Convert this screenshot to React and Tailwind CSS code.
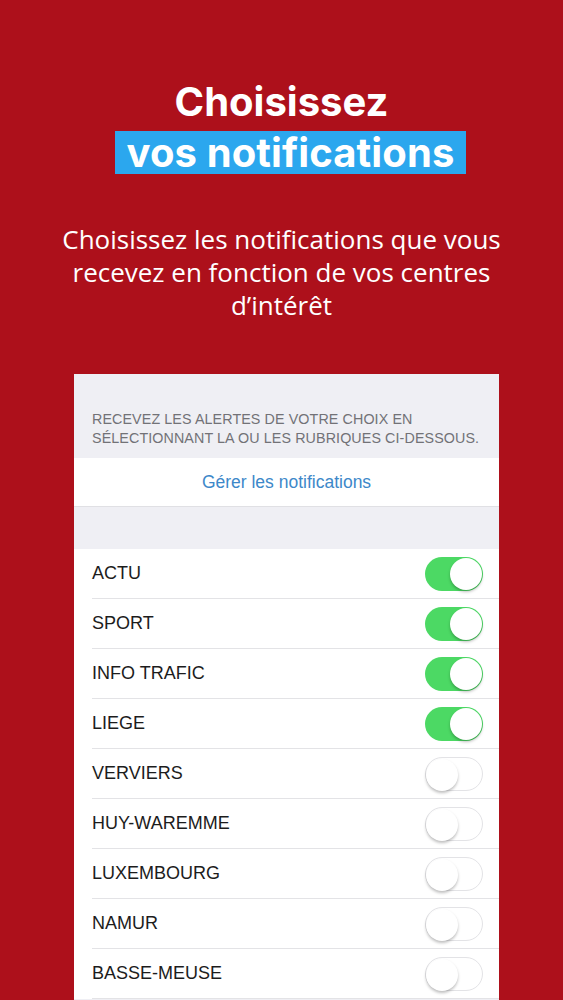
import React, { useState } from 'react';

const topics = [
  { name: 'ACTU', on: true },
  { name: 'SPORT', on: true },
  { name: 'INFO TRAFIC', on: true },
  { name: 'LIEGE', on: true },
  { name: 'VERVIERS', on: false },
  { name: 'HUY-WAREMME', on: false },
  { name: 'LUXEMBOURG', on: false },
  { name: 'NAMUR', on: false },
  { name: 'BASSE-MEUSE', on: false },
];

const Toggle = ({ on, onClick }) => (
  <button
    onClick={onClick}
    className={`relative w-[58px] h-[34px] rounded-full transition-colors ${
      on ? 'bg-[#4cd964]' : 'bg-white border border-[#e3e3e6]'
    }`}
  >
    <span
      className={`absolute top-[1px] w-[32px] h-[32px] rounded-full bg-white shadow-[0_2px_3px_rgba(0,0,0,0.25)] transition-all ${
        on ? 'left-[25px]' : 'left-[0px] top-[0px]'
      }`}
    ></span>
  </button>
);

const App = () => {
  const [items, setItems] = useState(topics);

  const flip = (i) => {
    setItems(items.map((t, j) => (j === i ? { ...t, on: !t.on } : t)));
  };

  return (
    <div className="w-[563px] h-[1000px] overflow-hidden bg-[#ad101b] flex flex-col" style={{ fontFamily: 'Inter, sans-serif' }}>
      {/* Heading */}
      <div className="pt-[77px] flex flex-col items-center text-white">
        <h1 className="text-[40px] leading-[50px] font-bold">Choisissez</h1>
        <div className="mt-[4px] ml-[18px] bg-[#2ba7ee] w-[351px] h-[43px] flex items-center justify-center">
          <span className="text-[40px] leading-[43px] font-bold tracking-[0.1px]">vos notifications</span>
        </div>
      </div>

      <p
        className="mt-[49px] px-[45px] text-center text-white text-[26px] leading-[33px] font-normal"
        style={{ fontFamily: '"Open Sans", sans-serif' }}
      >
        Choisissez les notifications que vous recevez en fonction de vos centres d’intérêt
      </p>

      {/* Settings card */}
      <div
        className="mt-[52px] ml-[74px] w-[425px] flex-1 bg-[#efeff4]"
        style={{ fontFamily: '"Liberation Sans", Arial, sans-serif' }}
      >
        <div className="pt-[36px] pb-[10px] px-[18px] text-[14.3px] leading-[19px] text-[#727277] tracking-[0.1px]">
          RECEVEZ LES ALERTES DE VOTRE CHOIX EN
          <br />
          SÉLECTIONNANT LA OU LES RUBRIQUES CI-DESSOUS.
        </div>
        <div className="bg-white h-[49px] flex items-center justify-center border-b border-[#e0e0e4]">
          <span className="text-[17.5px] text-[#3d88c9]">Gérer les notifications</span>
        </div>
        <div className="h-[42px]"></div>
        <div className="bg-white">
          {items.map((t, i) => (
            <div key={t.name} className="pl-[18px]">
              <div className="h-[50px] flex items-center justify-between pr-[16px] border-b border-[#e3e3e6]">
                <span className="text-[18px] text-[#1c1c1c]">{t.name}</span>
                <Toggle on={t.on} onClick={() => flip(i)} />
              </div>
            </div>
          ))}
        </div>
      </div>
    </div>
  );
};

export default App;
